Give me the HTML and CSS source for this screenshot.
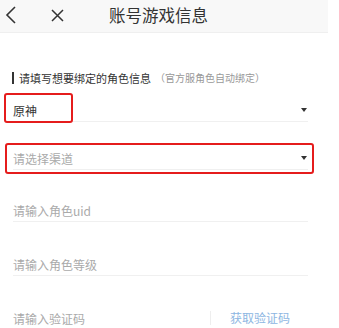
FILE: index.html
```html
<!DOCTYPE html>
<html lang="zh-CN">
<head>
  <meta charset="UTF-8">
  <title>账号游戏信息</title>
  <link rel="stylesheet" href="styles.css">
</head>
<body>

  <div class="page">
    <div class="header">
      <span class="header-btn back">
        <svg width="12" height="18" viewBox="0 0 12 18"><path d="M10 1 L2 9 L10 17" fill="none" stroke="#333" stroke-width="1.6"/></svg>
      </span>
      <span class="header-btn close">
        <svg width="13" height="13" viewBox="0 0 13 13"><path d="M1 1 L12 12 M12 1 L1 12" fill="none" stroke="#333" stroke-width="1.5"/></svg>
      </span>
      <h1 class="title">账号游戏信息</h1>
    </div>

    <div class="form">
      <div class="section-label">
        <span class="bar"></span>
        <span>请填写想要绑定的角色信息</span>
        <span class="hint">（官方服角色自动绑定）</span>
      </div>

      <div class="field field-first">
        <span class="value">原神</span>
        <span class="arrow"></span>
      </div>

      <div class="field field-channel">
        <span class="placeholder">请选择渠道</span>
        <span class="arrow"></span>
      </div>

      <div class="field field-uid">
        <span class="placeholder">请输入角色uid</span>
      </div>

      <div class="field">
        <span class="placeholder">请输入角色等级</span>
      </div>

      <div class="field">
        <span class="placeholder">请输入验证码</span>
        <span class="code-btn">获取验证码</span>
      </div>
    </div>

    <!-- annotation boxes -->
    <div class="mark mark-game"></div>
    <div class="mark mark-channel"></div>
  </div>

</body>
</html>
```

FILE: styles.css
```css
body {
  margin: 0;
  background: #fff;
  font-family: "Noto Sans CJK SC", "Noto Sans", sans-serif;
  color: #333;
}

.page {
  position: relative;
  width: 328px;
  height: 328px;
  overflow: hidden;
}

.header {
  display: flex;
  align-items: center;
  height: 32px;
  background: #f8f8f8;
  border-bottom: 1px solid #efefef;
}

.header-btn {
  display: flex;
  align-items: center;
}

.back {
  margin-left: 5px;
  margin-top: -2px;
}

.close {
  margin-left: 34px;
  margin-top: -2px;
}

.title {
  margin: -3px 0 0 45px;
  font-size: 16.5px;
  font-weight: normal;
  color: #333;
}

.form {
  padding: 0 20px 0 13px;
}

.section-label {
  display: flex;
  align-items: center;
  margin-top: 37px;
  font-size: 11px;
  color: #333;
  line-height: 16px;
}

.bar {
  width: 2px;
  height: 12px;
  background: #333;
  margin: 0 5px 0 -1px;
}

.hint {
  margin-left: 4px;
  font-size: 10px;
  color: #999;
}

.field {
  display: flex;
  align-items: center;
  height: 22px;
  border-bottom: 1px solid #f0f0f0;
  margin-top: 31px;
  font-size: 12px;
}

.field-first {
  margin-top: 13px;
}

.field-channel {
  margin-top: 25px;
}

.field-uid {
  margin-top: 29px;
}

.value {
  color: #333;
  font-size: 12px;
}

.placeholder {
  color: #aaa;
}

.arrow {
  margin-left: auto;
  margin-right: 1px;
  width: 0;
  height: 0;
  border-left: 3.5px solid transparent;
  border-right: 3.5px solid transparent;
  border-top: 4px solid #333;
}

.code-btn {
  margin-left: auto;
  padding-left: 19px;
  margin-right: 18px;
  border-left: 1px solid #eee;
  color: #8db6e2;
  line-height: 14px;
}

.mark {
  position: absolute;
  border: 2px solid #e51c1c;
  border-radius: 3px;
}

.mark-game {
  left: 4px;
  top: 93px;
  width: 65px;
  height: 26px;
}

.mark-channel {
  left: 5px;
  top: 143px;
  width: 305px;
  height: 27px;
}
```
